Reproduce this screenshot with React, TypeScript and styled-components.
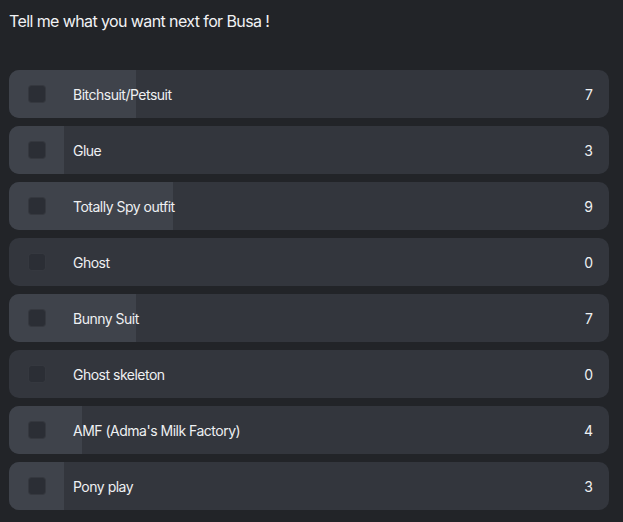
import React from "react";
import styled, { createGlobalStyle } from "styled-components";

const GlobalStyle = createGlobalStyle`
  html, body {
    margin: 0;
    padding: 0;
    background: #222428;
  }
  body {
    font-family: Inter, "Noto Sans", sans-serif;
    color: #e8eaed;
  }
`;

const Page = styled.div`
  padding: 10px 14px 0 9px;
  width: 600px;
`;

const Title = styled.h1`
  margin: 0 0 38px;
  font-size: 16px;
  font-weight: 400;
  line-height: 22px;
  letter-spacing: -0.6px;
  color: #f1f2f4;
`;

const List = styled.div`
  display: flex;
  flex-direction: column;
  gap: 8px;
`;

const Row = styled.label`
  position: relative;
  display: flex;
  align-items: center;
  height: 48px;
  border-radius: 10px;
  background: #33363d;
  overflow: hidden;
  cursor: pointer;
`;

const Fill = styled.div<{ $pct: number }>`
  position: absolute;
  left: 0;
  top: 0;
  bottom: 0;
  width: ${(p) => p.$pct}%;
  background: #3f434b;
`;

const Box = styled.span`
  position: relative;
  box-sizing: border-box;
  width: 18px;
  height: 18px;
  margin-left: 19px;
  border-radius: 4px;
  border: 1px solid rgba(255, 255, 255, 0.05);
  background: #2b2e35;
`;

const Label = styled.span`
  position: relative;
  flex: 1;
  margin-left: 27px;
  font-size: 14px;
  letter-spacing: -0.5px;
  color: #eef0f2;
`;

const Count = styled.span`
  position: relative;
  margin-right: 16px;
  font-size: 14px;
  color: #eef0f2;
`;

const options = [
  { label: "Bitchsuit/Petsuit", votes: 7 },
  { label: "Glue", votes: 3 },
  { label: "Totally Spy outfit", votes: 9 },
  { label: "Ghost", votes: 0 },
  { label: "Bunny Suit", votes: 7 },
  { label: "Ghost skeleton", votes: 0 },
  { label: "AMF (Adma's Milk Factory)", votes: 4 },
  { label: "Pony play", votes: 3 },
];

export default function App() {
  const total = options.reduce((s, o) => s + o.votes, 0);
  return (
    <>
      <GlobalStyle />
      <Page>
        <Title>Tell me what you want next for Busa !</Title>
        <List>
          {options.map((o) => (
            <Row key={o.label}>
              <Fill $pct={(o.votes / total) * 100} />
              <Box />
              <Label>{o.label}</Label>
              <Count>{o.votes}</Count>
            </Row>
          ))}
        </List>
      </Page>
    </>
  );
}
